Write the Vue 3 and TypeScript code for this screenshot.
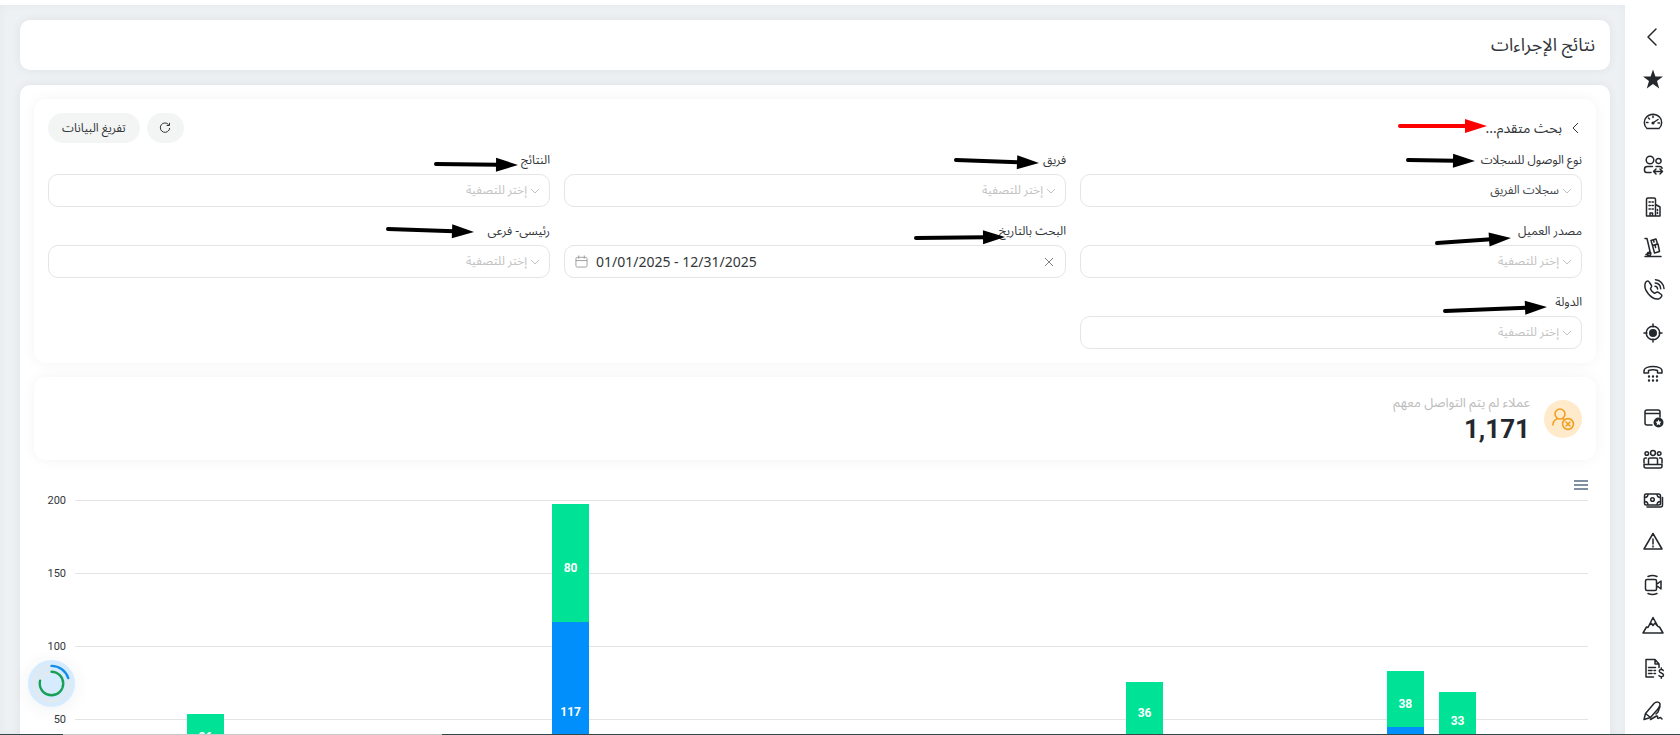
<script setup lang="ts">
import { ref } from 'vue'

interface NavIcon { label: string; line?: string; solid?: string }
interface Field { id: string; label: string; kind: 'select' | 'date'; value?: string }
interface Bar { slot: number; blue: number; green: number }
interface Arrow { x1: number; y1: number; x2: number; y2: number; color: string }

const ring = (x: number, y: number, r: number): string =>
  `M${x - r} ${y}a${r} ${r} 0 1 0 ${2 * r} 0a${r} ${r} 0 1 0 ${-2 * r} 0`

const icons: NavIcon[] = [
  { label: 'طي القائمة', line: 'M15 3L7 11L15 19' },
  { label: 'المفضلة', solid: 'M12 1.500L14.400 8.500H22L16 13L18.200 20.500L12 16L5.800 20.500L8 13L2 8.500H9.600Z' },
  { label: 'لوحة التحكم', line: 'M6 18.500C2.500 15.500 2.500 10 5.500 7C9 3.200 15 3.200 18.500 7C21.500 10 21.500 15.500 18 18.500ZM12.500 12.500L17 9.500M5.500 12.500h1.500M7.500 8l1 1M12 6v1.500M18.500 13h-1.500', solid: ring(12, 13, 1.6) },
  { label: 'العملاء', line: ring(9, 8, 3.8) + ring(17.5, 9, 2.6) + 'M10 20.500H5.500C4 20.500 3.500 19.500 3.500 18V17C3.500 15 5 14.500 6.500 14.500H11.500M15 14.500h3.500c1.500 0 2.500 .8 2.500 2M12.500 19.500H21.500M15 17L12.500 19.500L15 22M19 17L21.500 19.500L19 22' },
  { label: 'العقارات', line: 'M5.500 22V5.500Q5.500 4 7 4H13Q14.500 4 14.500 5.500V22ZM14.500 10.500L19 13V22H14.500M9 22v-3h2.500v3M8 8h1.300M11 8h1.300M8 11.500h1.300M11 11.500h1.300M8 15h1.300M11 15h1.300M16.500 15.500v1M16.500 18.500v1' },
  { label: 'المخزون', line: 'M4 2.500H6L9.500 17.500M10 4.500L15 3L16.500 8L11.500 9.500ZM11.500 9.500L17 8L18.500 15.500L13.500 17ZM12.500 4l.5 2M14 9l.6 2.500M5 18.500L10 17M4 20.500H20' + ring(8, 18, 1.7) },
  { label: 'المكالمات', line: 'M4.500 4.500C6 2.500 7.500 2.500 8.500 4.500L10.500 7.500C11.300 9 9.200 10.200 9.500 11C10 12.500 12 14.500 13.500 15.200C14.500 15.600 15.500 13.500 17 14.200L20.300 16.500C22 17.800 19 20.800 17.500 21C10.500 22 1.500 11.500 4.500 4.500ZM14 8.200C15.500 8.300 16.500 9.500 16.600 11M14.200 5C17.200 5.200 19.500 7.500 19.700 10.700M14.500 1.800C19 2 22.700 5.700 23 10.500' },
  { label: 'الأهداف', line: ring(12, 13, 6.8) + 'M12 4v3M12 19v3M3 13h3M18 13h3', solid: ring(12, 13, 4) },
  { label: 'الهاتف', line: 'M3 9C3 3 21 3 21 9V11H16.500V8.500C13.500 7.500 10.500 7.500 7.500 8.500V11H3Z', solid: ring(8, 14.5, 1.2) + ring(12, 14.5, 1.2) + ring(16, 14.5, 1.2) + ring(8, 18.5, 1.2) + ring(12, 18.5, 1.2) + ring(16, 18.5, 1.2) },
  { label: 'الصفحات', line: 'M11 21H6Q4 21 4 19V8Q4 6 6 6H17Q19 6 19 8V13M4 9.500H19', solid: ring(17.5, 18.5, 5) + 'M17.500 15.500l-.9 1.900l-2 .3l1.400 1.500l-.3 2l1.800-.9l1.800 .9l-.3-2l1.400-1.500l-2-.3Z' },
  { label: 'الاجتماعات', line: ring(12, 7, 2.4) + ring(5.8, 7.5, 1.8) + ring(18.2, 7.5, 1.8) + 'M7.500 18V13Q7.500 12 9 12H15Q16.500 12 16.500 13V18M3 17V13Q3 12 4.500 12H5.500M21 17V13Q21 12 19.500 12H18.500M3 18.500H21V20Q21 22 19 22H5Q3 22 3 20Z' },
  { label: 'المدفوعات', line: 'M5 6H17.500Q19.500 6 19.500 8V15.500Q19.500 17 17.500 17H5Q3.500 17 3.500 15.500V8Q3.500 6 5 6ZM3.500 9.500Q7 9.500 7 6M16 6Q16 9.500 19.500 9.500M3.500 13.500Q7 13.500 7 17M16 17Q16 13.500 19.500 13.500M21.500 9.500V17Q21.500 19 19.500 19H6' + ring(11.5, 11.5, 1.8) },
  { label: 'التنبيهات', line: 'M12 3.500L21 19H3ZM12 9V14M12 16V17' },
  { label: 'الفيديو', line: 'M6 7.500H14Q15.500 7.500 15.500 9V17Q15.500 18.500 14 18.500H6Q4.500 18.500 4.500 17V9Q4.500 7.500 6 7.500ZM15.500 12L17.500 11L20 9V17L17.500 15L15.500 14M7 4.500Q11.500 2.500 16 4.500M7 21.500Q11.500 23.500 16 21.500' },
  { label: 'الإنجازات', line: 'M2 19L5.500 13L7 13.500L12 3.500L17 12.500L18.500 13L22 19ZM8.500 11L10.500 9.500L12 11.500L14 9L16 11.500' },
  { label: 'الفواتير', line: 'M12.500 21H5V3.500H14L18 8V11.500M14 3.500V8H18M7.500 11.500H14.500M7.500 14.500H11M13 14.500h1.500M7.500 17.500H11M13 17.500h1.500M22.300 14.500C21.500 13 18.200 13 18.200 15C18.200 17.400 22.500 16.600 22.500 19C22.500 21.200 19 21.200 18 19.600M20.300 12V13.500M20.300 20.800V22.300' },
  { label: 'التوقيع', line: 'M3 21.500L4.500 15.500L13 5.500C15 3.500 19 3.500 19 6.500C19 8 18 9.500 16 12L9.500 19.500L3 21.500M4.500 15.500L9.500 19.500M19 8.500L17 14L15 16M9.500 21.500L15.500 18Q17 17.500 16.500 19.500Q16.500 21 18 20L19.500 19.500L21 21' },
]

const fields: Field[] = [
  { id: 'access', label: 'نوع الوصول للسجلات', kind: 'select', value: 'سجلات الفريق' },
  { id: 'team', label: 'فريق', kind: 'select' },
  { id: 'results', label: 'النتائج', kind: 'select' },
  { id: 'source', label: 'مصدر العميل', kind: 'select' },
  { id: 'date', label: 'البحث بالتاريخ', kind: 'date' },
  { id: 'level', label: 'رئيسى- فرعى', kind: 'select' },
  { id: 'country', label: 'الدولة', kind: 'select' },
]

const dateRange = ref('01/01/2025 - 12/31/2025')
const ticks = [200, 150, 100, 50, 0]
const bars: Bar[] = [
  { slot: 3, blue: 28, green: 26 },
  { slot: 10, blue: 117, green: 80 },
  { slot: 21, blue: 40, green: 36 },
  { slot: 26, blue: 45, green: 38 },
  { slot: 27, blue: 36, green: 33 },
]
const share = (n: number): string => `${n / 2}%`

const arrows: Arrow[] = [
  { x1: 1400, y1: 126, x2: 1487, y2: 126, color: '#ff0000' },
  { x1: 1408, y1: 160, x2: 1475, y2: 161, color: '#000' },
  { x1: 956, y1: 160, x2: 1039, y2: 163, color: '#000' },
  { x1: 436, y1: 164, x2: 518, y2: 165, color: '#000' },
  { x1: 1437, y1: 243, x2: 1511, y2: 238, color: '#000' },
  { x1: 916, y1: 238, x2: 1005, y2: 237, color: '#000' },
  { x1: 388, y1: 229, x2: 474, y2: 232, color: '#000' },
  { x1: 1445, y1: 311, x2: 1547, y2: 307, color: '#000' },
]
const arrowLength = (a: Arrow): number => Math.hypot(a.x2 - a.x1, a.y2 - a.y1)
const arrowTurn = (a: Arrow): string =>
  `translate(${a.x1} ${a.y1}) rotate(${(Math.atan2(a.y2 - a.y1, a.x2 - a.x1) * 180) / Math.PI})`
</script>

<template>
  <div class="shell" dir="rtl">
    <nav class="rail" aria-label="القائمة">
      <button v-for="icon in icons" :key="icon.label" type="button" :aria-label="icon.label">
        <svg viewBox="0 0 24 24">
          <path v-if="icon.line" class="line" :d="icon.line" />
          <path v-if="icon.solid" class="solid" :d="icon.solid" />
        </svg>
      </button>
    </nav>

    <main class="content">
      <header class="card title-card"><h1>نتائج الإجراءات</h1></header>

      <section class="card body-card">
        <form class="panel" @submit.prevent>
          <div class="panel-head">
            <button type="button" class="toggle">
              <svg viewBox="0 0 10 12"><path d="M8 1L3 6L8 11" /></svg>
              <span>بحث متقدم...</span>
            </button>
            <div class="actions">
              <button type="button" class="pill icon-pill" aria-label="تحديث">
                <svg viewBox="0 0 12 12"><path d="M9.600 2.600A4.700 4.700 0 1 0 10.700 6M10.500 .8V3.500H7.600" /></svg>
              </button>
              <button type="button" class="pill">تفريغ البيانات</button>
            </div>
          </div>
          <div class="fields">
            <div v-for="f in fields" :key="f.id" class="field">
              <label :for="f.id">{{ f.label }}</label>
              <div v-if="f.kind === 'select'" class="control">
                <svg class="chev" viewBox="0 0 10 10"><path d="M1 3L5 7L9 3" /></svg>
                <select :id="f.id" :class="{ filled: f.value }">
                  <option>{{ f.value ?? 'إختر للتصفية' }}</option>
                </select>
              </div>
              <div v-else class="control date" dir="ltr">
                <svg class="cal" viewBox="0 0 14 14"><path d="M2.500 2.500H11.500Q13 2.500 13 4V11.500Q13 13 11.500 13H2.500Q1 13 1 11.500V4Q1 2.500 2.500 2.500ZM1 6H13M4 .5V4M10 .5V4" /></svg>
                <input :id="f.id" v-model="dateRange" type="text" />
                <button type="button" class="clear" aria-label="مسح" @click="dateRange = ''">
                  <svg viewBox="0 0 10 10"><path d="M1 1L9 9M9 1L1 9" /></svg>
                </button>
              </div>
            </div>
          </div>
        </form>

        <article class="panel stat">
          <div class="badge">
            <svg viewBox="0 0 38 38">
              <path :d="ring(16, 14, 5) + 'M9 25V24.500C9 21 12 18.700 14.500 18.700M19 18.700L20 19.200' + ring(24, 24, 5.4) + 'M22 22L26 26M26 22L22 26'" />
            </svg>
          </div>
          <div class="figures">
            <span class="caption">عملاء لم يتم التواصل معهم</span>
            <strong>1,171</strong>
          </div>
        </article>

        <section class="chart" dir="ltr">
          <div class="chart-tools">
            <button type="button" class="burger" aria-label="قائمة المخطط"><i></i><i></i><i></i></button>
          </div>
          <div class="plot">
            <div class="axis"><span v-for="t in ticks" :key="t">{{ t }}</span></div>
            <div class="area">
              <div class="grid-lines"><i v-for="t in ticks" :key="t"></i></div>
              <div class="bars">
                <div v-for="b in bars" :key="b.slot" class="bar" :style="{ gridColumn: b.slot }">
                  <div class="seg green" :style="{ height: share(b.green) }">{{ b.green }}</div>
                  <div class="seg blue" :style="{ height: share(b.blue) }">{{ b.blue }}</div>
                </div>
              </div>
            </div>
          </div>
        </section>
      </section>
    </main>

    <button type="button" class="progress" aria-label="التقدم">
      <svg viewBox="0 0 48 48">
        <circle class="track" cx="24" cy="24" r="18" />
        <circle class="track" cx="24" cy="24" r="12" />
        <circle class="outer" cx="24" cy="24" r="18" pathLength="100" transform="rotate(-90 24 24)" />
        <circle class="inner" cx="24" cy="24" r="12" pathLength="100" transform="rotate(-90 24 24)" />
      </svg>
    </button>

    <svg class="marks" aria-hidden="true">
      <g v-for="(a, i) in arrows" :key="i" :transform="arrowTurn(a)" :fill="a.color" :stroke="a.color">
        <line x1="0" y1="0" :x2="arrowLength(a) - 20" y2="0" stroke-width="4" stroke-linecap="round" />
        <path :d="`M${arrowLength(a)} 0l-22 -7v14z`" />
      </g>
    </svg>
    <div class="edge"><i></i></div>
  </div>
</template>

<style>
body { margin: 0; overflow: hidden; }
</style>

<style scoped>
* { box-sizing: border-box; }
.shell {
  display: flex;
  height: 100vh;
  overflow: hidden;
  padding-top: 5px;
  background: #fff;
  color: #333639;
  font-family: "Noto Sans Arabic", Roboto, "DejaVu Sans", sans-serif;
  font-size: 12px;
}
button, select, input { font: inherit; color: inherit; margin: 0; }
button { border: 0; background: none; padding: 0; display: flex; align-items: center; justify-content: center; cursor: pointer; }
svg path { fill: none; stroke: currentColor; }

.rail { width: 55px; flex: none; display: flex; flex-direction: column; padding-top: 12px; }
.rail button { height: 42px; flex: none; color: #24282c; }
.rail svg { width: 24px; height: 24px; }
.rail .line { stroke-width: 1.5; stroke-linecap: round; stroke-linejoin: round; }
.rail .solid { fill: currentColor; fill-rule: evenodd; stroke: none; }

.content {
  flex: 1;
  min-width: 0;
  display: flex;
  flex-direction: column;
  gap: 15px;
  padding: 15px 15px 0 20px;
  background: #edf1f4;
  box-shadow: inset 0 0 8px rgba(60, 70, 90, 0.05);
}
.card { background: #fff; border-radius: 10px; box-shadow: 0 0 10px rgba(60, 60, 70, 0.08); }
.title-card { height: 50px; flex: none; display: flex; align-items: center; padding: 0 15px; }
h1 { margin: 0; font-size: 18px; font-weight: 400; line-height: 24px; }
.body-card { flex: 1 0 auto; display: flex; flex-direction: column; gap: 14px; padding: 14px; }

.panel { border-radius: 12px; padding: 14px; box-shadow: 0 0 14px rgba(0, 0, 0, 0.05); background: #fff; }
.panel-head { display: flex; justify-content: space-between; align-items: center; height: 30px; margin-bottom: 8px; }
.toggle { gap: 8px; font-size: 14px; padding-right: 2px; }
.toggle svg { width: 10px; height: 12px; }
.actions { display: flex; gap: 7px; }
.pill { height: 30px; border-radius: 15px; background: #f3f5f5; padding: 0 14px; }
.icon-pill { width: 37px; padding: 0; }
.icon-pill svg { width: 12px; height: 12px; }

.fields { display: grid; grid-template-columns: repeat(3, 1fr); gap: 15px 14px; }
.field { display: flex; flex-direction: column; gap: 3px; min-width: 0; }
label { line-height: 20px; height: 20px; }
.control { position: relative; height: 33px; display: flex; align-items: center; border: 1px solid #e3e5e8; border-radius: 10px; }
.chev { position: absolute; right: 9px; width: 10px; height: 10px; color: #c2c2c2; pointer-events: none; }
select { appearance: none; width: 100%; height: 100%; border: 0; background: none; padding: 0 22px 0 10px; color: #c2c2c2; outline: 0; }
select.filled { color: #44484c; }
.date { gap: 8px; padding: 0 10px; }
.cal { width: 13px; height: 13px; color: #9a9a9a; flex: none; }
.date input { flex: 1; min-width: 0; border: 0; padding: 0; outline: 0; background: none; font-family: "Noto Sans", sans-serif; font-size: 14px; }
.clear { width: 12px; height: 12px; color: #808080; }
.clear svg { width: 10px; height: 10px; }

.stat { display: flex; align-items: center; gap: 14px; height: 83px; }
.badge { width: 38px; height: 38px; border-radius: 50%; background: #ffeacb; color: #f0a020; }
.badge path { stroke-width: 1.6; stroke-linecap: round; }
.figures { display: flex; flex-direction: column; }
.caption { color: #bcbcbc; font-size: 13px; line-height: 20px; }
strong { font-family: Roboto, sans-serif; font-size: 26px; line-height: 32px; color: #24282e; }

.chart { padding: 4px 8px 0 0; margin-left: 8px; }
.chart-tools { display: flex; justify-content: flex-end; height: 14px; align-items: center; margin-bottom: 8px; }
.burger { flex-direction: column; gap: 2px; width: 14px; }
.burger i { height: 2px; width: 14px; background: #8090a2; }
.plot { display: flex; height: 293px; gap: 9px; }
.axis { width: 24px; display: flex; flex-direction: column; justify-content: space-between; text-align: right; font-family: Roboto, sans-serif; font-size: 11px; }
.axis span { height: 1px; line-height: 1px; }
.area { flex: 1; display: grid; }
.grid-lines, .bars { grid-area: 1 / 1; min-height: 0; }
.grid-lines { display: flex; flex-direction: column; justify-content: space-between; }
.grid-lines i { height: 1px; background: #e4e4e4; }
.bars { display: grid; grid-template-columns: repeat(29, 1fr); grid-template-rows: 100%; }
.bar { grid-row: 1; display: flex; flex-direction: column; justify-content: flex-end; width: 70%; margin: 0 auto; }
.seg { display: flex; align-items: center; justify-content: center; padding-top: 9px; color: #fff; font-family: Roboto, sans-serif; font-size: 12px; font-weight: 700; line-height: 14px; }
.green { background: #00e396; }
.blue { background: #008ffb; }

.progress { position: fixed; left: 28px; bottom: 28px; width: 47px; height: 47px; border-radius: 50%; background: #d6ebfd; box-shadow: 0 2px 18px rgba(0, 50, 100, 0.07); }
.progress svg { width: 47px; height: 47px; }
.progress circle { fill: none; stroke-width: 2.4; stroke-linecap: round; }
.progress .track { stroke: #e6e8ea; }
.progress .outer { stroke: #108ee9; stroke-dasharray: 20 80; }
.progress .inner { stroke: #18a058; stroke-dasharray: 79 21; }

.marks { position: absolute; top: 0; left: 0; width: 100%; height: 100%; pointer-events: none; }
.marks path { fill: inherit; stroke: none; }
.edge { position: fixed; left: 0; right: 0; bottom: 0; height: 1px; background: #33484a; }
.edge i { display: block; width: 379px; height: 1px; margin-right: auto; margin-left: 63px; background: #c8c8c8; }
.edge { direction: ltr; }
</style>
